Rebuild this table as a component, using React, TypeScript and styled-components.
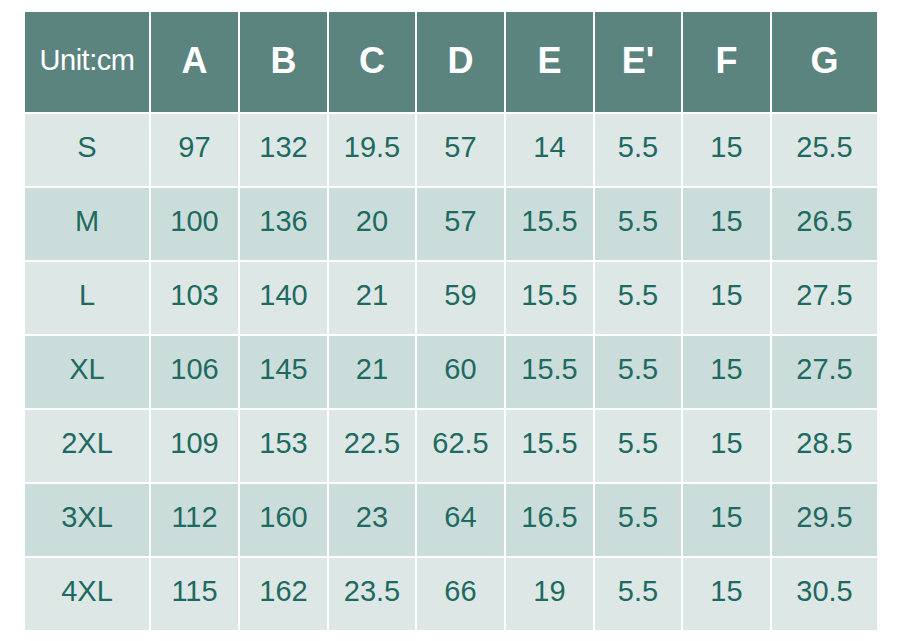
import React from 'react';
import styled, { createGlobalStyle } from 'styled-components';

const GlobalStyle = createGlobalStyle`
  html, body {
    margin: 0;
    padding: 0;
    background: #ffffff;
  }
  body {
    font-family: "Liberation Sans", Arial, sans-serif;
  }
`;

const Page = styled.div`
  width: 900px;
  height: 641px;
  padding: 12px 0 0 25px;
  box-sizing: border-box;
  background: #ffffff;
`;

const Table = styled.div`
  display: grid;
  grid-template-columns: 124px 87px 87px 86px 87px 87px 86px 87px 105px;
  grid-template-rows: 100px repeat(7, 72px);
  gap: 2px;
  width: 852px;
  background: #ffffff;
`;

const HeadCell = styled.div<{ $small?: boolean }>`
  display: flex;
  align-items: center;
  justify-content: center;
  background: #5b847f;
  color: #ffffff;
  font-size: ${(p) => (p.$small ? '29px' : '36px')};
  font-weight: ${(p) => (p.$small ? 400 : 700)};
  letter-spacing: ${(p) => (p.$small ? '-0.5px' : '0')};
  padding-bottom: 3px;
  box-sizing: border-box;
`;

const Cell = styled.div<{ $shade: boolean }>`
  display: flex;
  align-items: center;
  justify-content: center;
  background: ${(p) => (p.$shade ? '#cbdddb' : '#dde7e6')};
  color: #1e6a5f;
  font-size: 29px;
  padding-bottom: 6px;
  box-sizing: border-box;
`;

const headers = ['A', 'B', 'C', 'D', 'E', "E'", 'F', 'G'];

const rows: string[][] = [
  ['S', '97', '132', '19.5', '57', '14', '5.5', '15', '25.5'],
  ['M', '100', '136', '20', '57', '15.5', '5.5', '15', '26.5'],
  ['L', '103', '140', '21', '59', '15.5', '5.5', '15', '27.5'],
  ['XL', '106', '145', '21', '60', '15.5', '5.5', '15', '27.5'],
  ['2XL', '109', '153', '22.5', '62.5', '15.5', '5.5', '15', '28.5'],
  ['3XL', '112', '160', '23', '64', '16.5', '5.5', '15', '29.5'],
  ['4XL', '115', '162', '23.5', '66', '19', '5.5', '15', '30.5'],
];

function App() {
  return (
    <>
      <GlobalStyle />
      <Page>
        <Table>
          <HeadCell $small>Unit:cm</HeadCell>
          {headers.map((h) => (
            <HeadCell key={h}>{h}</HeadCell>
          ))}
          {rows.map((row, i) =>
            row.map((v, j) => (
              <Cell key={`${i}-${j}`} $shade={i % 2 === 1}>
                {v}
              </Cell>
            ))
          )}
        </Table>
      </Page>
    </>
  );
}

export default App;
